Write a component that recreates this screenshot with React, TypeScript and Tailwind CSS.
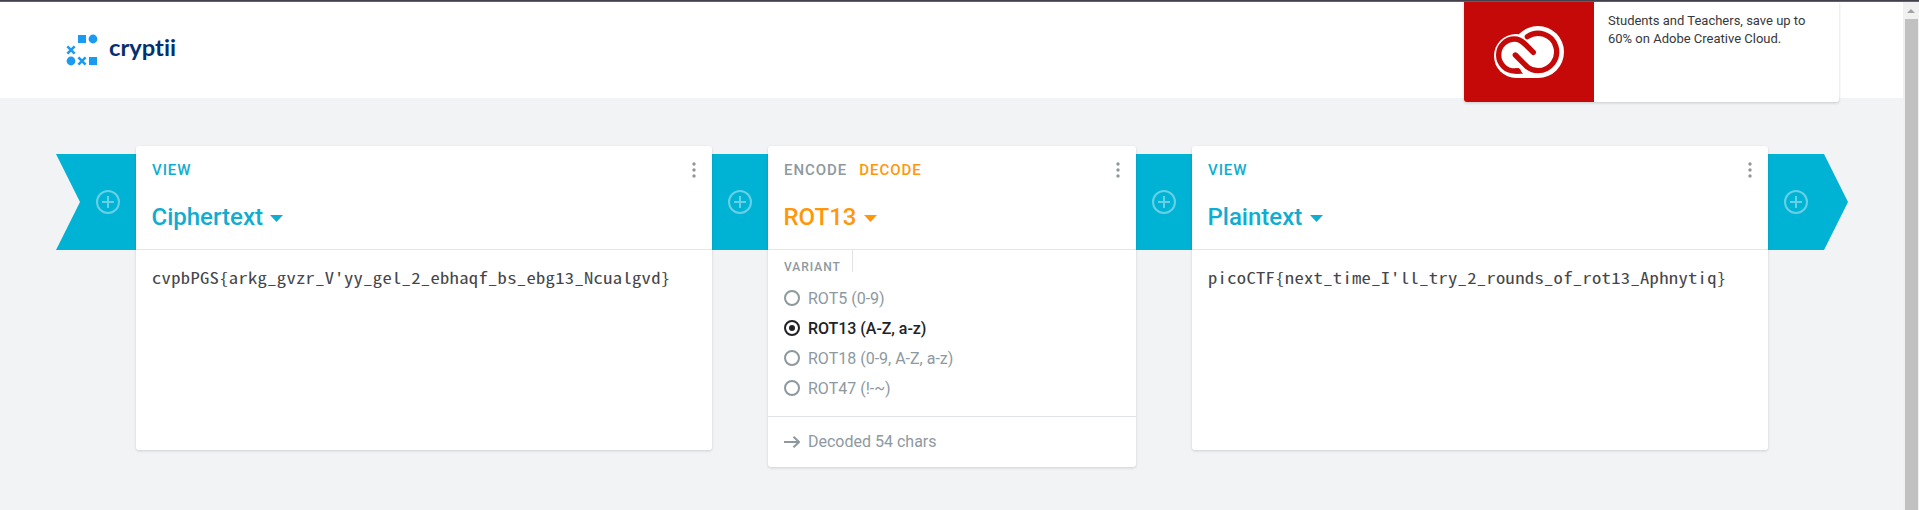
import type { ReactNode } from "react";

function Logo() {
  return (
    <svg width="120" height="40" viewBox="66 30 120 40" aria-label="cryptii">
      <g fill="#1a9af0">
        <rect x="78" y="35" width="8" height="8" />
        <circle cx="93" cy="39" r="4.4" />
        <circle cx="71" cy="61" r="4.4" />
        <rect x="89" y="57" width="8" height="8" />
      </g>
      <g stroke="#1a9af0" strokeWidth="2.6">
        <path d="M67.4 46.4l7.2 7.2M74.6 46.4l-7.2 7.2" />
        <path d="M78.4 57.4l7.2 7.2M85.6 57.4l-7.2 7.2" />
      </g>
      <text
        x="109"
        y="56.2"
        textLength="67"
        lengthAdjust="spacingAndGlyphs"
        className="fill-[#04306f] font-['Lato',sans-serif] text-[23px] font-bold [font-variant-ligatures:none]"
      >
        cryptii
      </text>
    </svg>
  );
}

function CreativeCloud() {
  return (
    <svg width="70" height="52" viewBox="162 78 210 156">
      <g fill="#fff">
        <circle cx="228" cy="168" r="66" />
        <circle cx="294" cy="156" r="78" />
        <path d="M228 168h66v66h-66z" />
      </g>
      <g fill="none" stroke="#c50808" strokeWidth="16">
        <path strokeLinecap="round" d="M226 165l36 36c10 8 20 11 32 11a56 56 0 1 0-32-102" />
        <path strokeLinecap="round" d="M280 157l-22-22c-9-9-18-18-34-18a48 48 0 0 0 0 96h10" />
        <path fill="#c50808" stroke="none" d="M226 205h10l13 16h-23z" />
      </g>
    </svg>
  );
}

function Connector({ shape = "mid" }: { shape?: "start" | "mid" | "end" }) {
  const box = {
    start: "w-20 pl-6 [clip-path:polygon(0_0,100%_0,100%_100%,0_100%,24px_50%)]",
    mid: "w-14",
    end: "w-20 pr-6 [clip-path:polygon(0_0,56px_0,100%_50%,56px_100%,0_100%)]",
  }[shape];
  return (
    <div className={`mt-2 flex h-24 shrink-0 items-center justify-center bg-[#00b2d4] ${box}`}>
      <svg width="24" height="24" viewBox="0 0 24 24" fill="none" stroke="#66d1e5">
        <circle cx="12" cy="12" r="11" strokeWidth="2" />
        <path d="M6 12h12M12 6v12" strokeWidth="2" />
      </svg>
    </div>
  );
}

function Dots() {
  return (
    <svg width="4" height="16" viewBox="0 0 4 16" fill="#8d999f" className="mt-[2px]">
      <circle cx="2" cy="2" r="1.7" />
      <circle cx="2" cy="8" r="1.7" />
      <circle cx="2" cy="14" r="1.7" />
    </svg>
  );
}

function Brick({ width, color, modes, title, children }: { width: string; color: string; modes: ReactNode; title: string; children: ReactNode }) {
  return (
    <section className={`z-10 shrink-0 rounded-[3px] bg-white shadow-[0_1px_3px_rgba(0,0,0,0.15)] ${width}`}>
      <header className="h-[104px] border-b border-[#e2e5e8] px-4 pt-[14px]">
        <div className="flex h-[20px] justify-between">
          <div className="flex gap-3 text-[15px] leading-[20px] font-medium tracking-[0.95px]">{modes}</div>
          <Dots />
        </div>
        <div className={`mt-[21px] -ml-[0.5px] flex h-8 items-center gap-2 text-[24px] leading-8 font-medium ${color}`}>
          {title}
          <svg width="13" height="7" viewBox="0 0 13 7" fill="currentColor" className="mt-[3px] -ml-[0.5px]">
            <path d="M0 0h13L6.500 7z" />
          </svg>
        </div>
      </header>
      {children}
    </section>
  );
}

function Message({ text }: { text: string }) {
  return (
    <div className="h-[200px] px-4 pt-[15px]">
      <p className="w-max origin-left scale-x-120 font-['Noto_Sans_Mono_CJK_SC','Liberation_Mono',monospace] text-[15.5px] leading-[25px] tracking-[0.25px] text-[#45464b]">
        {text}
      </p>
    </div>
  );
}

const variants = ["ROT5 (0-9)", "ROT13 (A-Z, a-z)", "ROT18 (0-9, A-Z, a-z)", "ROT47 (!-~)"];

export default function App() {
  return (
    <div className="flex h-[510px] w-[1919px] flex-col overflow-hidden bg-[#f2f3f5] font-['Roboto',sans-serif]">
      <div className="h-[2px] shrink-0 border-b border-[#62626f] bg-[#42414d]" />
      <div className="flex min-h-0 flex-1">
        <div className="flex-1">
          <div className="flex h-24 justify-between bg-white pr-16 pl-[66px]">
            <div className="pt-7">
              <Logo />
            </div>
            <aside className="flex h-[100px] w-[375px] overflow-hidden rounded-b-[3px] bg-white shadow-[0_1px_3px_rgba(0,0,0,0.18)]">
              <div className="flex w-[130px] items-center justify-center bg-[#c50808]">
                <CreativeCloud />
              </div>
              <p className="pt-[10px] pl-[14px] text-[13px] leading-[18px] text-[#37383d]">
                Students and Teachers, save up to
                <br />
                60% on Adobe Creative Cloud.
              </p>
            </aside>
          </div>
          <main className="flex items-start pt-12 pl-14">
            <Connector shape="start" />
            <Brick width="w-[576px]" color="text-[#0fadd1]" title="Ciphertext" modes={<span className="text-[#0fadd1]">VIEW</span>}>
              <Message text="cvpbPGS{arkg_gvzr_V'yy_gel_2_ebhaqf_bs_ebg13_Ncualgvd}" />
            </Brick>
            <Connector />
            <Brick
              width="w-[368px]"
              color="text-[#ff9708]"
              title="ROT13"
              modes={
                <>
                  <span className="text-[#8d999f]">ENCODE</span>
                  <span className="text-[#ff9708]">DECODE</span>
                </>
              }
            >
              <div className="h-[166px] px-4">
                <div className="flex h-[22px] w-[69px] border-r border-[#dfe4e8] pt-[9px] text-[12px] leading-4 font-medium tracking-[1px] text-[#8d999f]">VARIANT</div>
                <ul className="mt-[11px]">
                  {variants.map((name, i) => (
                    <li key={name} className={`flex h-[30px] items-center gap-2 text-[16px] ${i === 1 ? "font-medium tracking-[-0.05px] text-[#212225]" : "text-[#8d999f]"}`}>
                      <svg width="16" height="16" viewBox="0 0 16 16" fill="none" stroke="currentColor">
                        <circle cx="8" cy="8" r="7" strokeWidth="2" />
                        {i === 1 && <circle cx="8" cy="8" r="3" fill="currentColor" stroke="none" />}
                      </svg>
                      <span className="pt-[2px]">{name}</span>
                    </li>
                  ))}
                </ul>
              </div>
              <footer className="flex h-[51px] items-center gap-2 border-t border-[#dfe4e8] px-4 text-[16px] text-[#8d999f]">
                <svg width="16" height="12" viewBox="0 0 16 12" fill="none" stroke="currentColor" strokeWidth="2">
                  <path d="M0 6h15M9.500 0.700L15 6l-5.500 5.300" />
                </svg>
                Decoded 54 chars
              </footer>
            </Brick>
            <Connector />
            <Brick width="w-[576px]" color="text-[#0fadd1]" title="Plaintext" modes={<span className="text-[#0fadd1]">VIEW</span>}>
              <Message text="picoCTF{next_time_I'll_try_2_rounds_of_rot13_Aphnytiq}" />
            </Brick>
            <Connector shape="end" />
          </main>
        </div>
        <div className="flex w-4 flex-col items-center bg-[#f1f1f1]">
          <svg width="16" height="17" viewBox="0 0 16 17">
            <path d="M4 11h8L8 7z" fill="#a3a3a3" />
          </svg>
          <div className="w-[13px] flex-1 bg-[#c1c1c1]" />
        </div>
      </div>
    </div>
  );
}
